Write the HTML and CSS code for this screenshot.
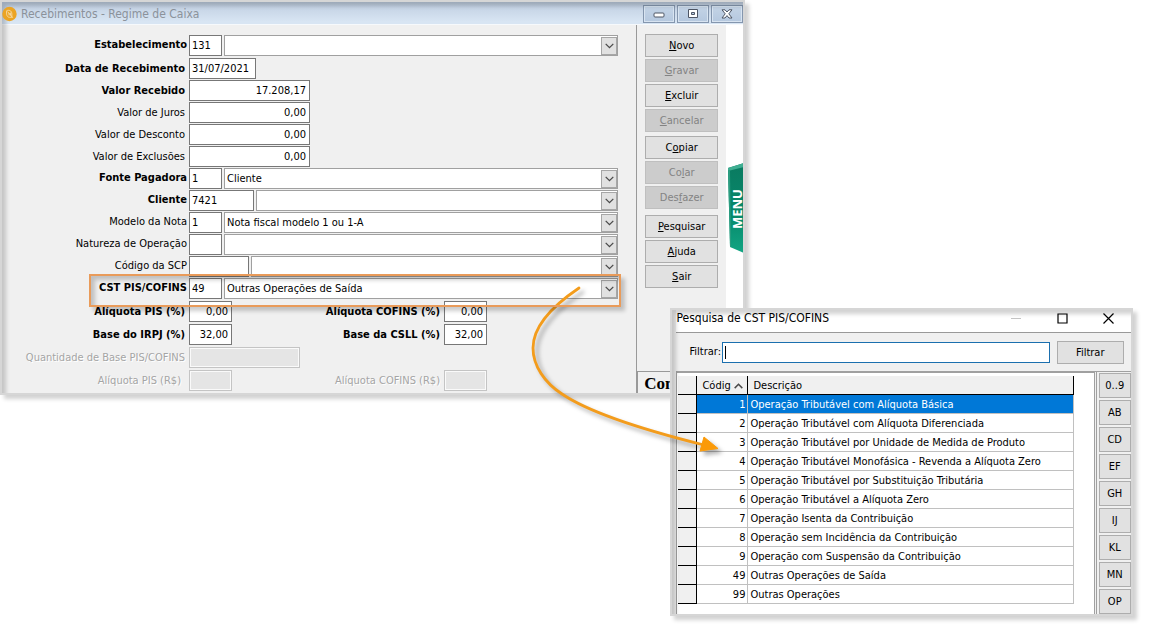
FILE: index.html
```html
<!DOCTYPE html>
<html lang="pt-BR">
<head>
<meta charset="utf-8">
<title>Recebimentos - Regime de Caixa</title>
<link rel="stylesheet" href="styles.css">
</head>
<body>
<svg class="defs" aria-hidden="true">
  <symbol id="chevron" viewBox="0 0 9 6"><path d="M.7.9 4.5 4.7 8.3.9" fill="none" stroke="#4a4a4a" stroke-width="1.3"/></symbol>
</svg>
<main class="desktop">
  <section class="window main-window">
    <header class="titlebar">
      <svg class="app-icon" viewBox="0 0 16 16" aria-hidden="true"><circle cx="8" cy="8" r="7.7" fill="#eba424"/><path d="M5 4.500c2-1 5.500-.5 5.500 3.500v3.500H8C5 11.500 4.500 8 5 4.500zM6 5.500l5.500 6.500M7.500 7v2.500M9 6.500v3" fill="none" stroke="#f8dfae" stroke-width=".9"/></svg>
      <h1 class="title">Recebimentos - Regime de Caixa</h1>
      <div class="controls">
        <button class="control" aria-label="Minimizar"><svg viewBox="0 0 12 10"><rect x="1" y="4" width="10" height="4" rx="1" fill="#fff" stroke="#4e5665"/></svg></button>
        <button class="control" aria-label="Restaurar"><svg viewBox="0 0 12 10"><path d="M1.500.500h9v8h-9z" fill="#fff" stroke="#4e5665"/><path d="M4.500 3.500h3v2h-3z" fill="#b9cce2" stroke="#4e5665"/></svg></button>
        <button class="control" aria-label="Fechar"><svg viewBox="0 0 12 10"><path d="M1 .8h3L6 3l2-2.200h3L7.800 4.800 11 9H8L6 6.600 4 9H1l3.200-4.200z" fill="#fff" stroke="#4e5665"/></svg></button>
      </div>
    </header>
    <div class="main-body">
      <form class="form">
        <div class="row tall combo-row"><label class="label strong" for="est">Estabelecimento</label><input class="field code" id="est" value="131"><div class="combo"><select aria-label="Nome do estabelecimento"><option></option></select><span class="arrow"><svg><use href="#chevron"/></svg></span></div></div>
        <div class="row"><label class="label strong" for="data">Data de Recebimento</label><input class="field date" id="data" value="31/07/2021"></div>
        <div class="row"><label class="label strong" for="valor">Valor Recebido</label><input class="field amount" id="valor" value="17.208,17"></div>
        <div class="row"><label class="label" for="juros">Valor de Juros</label><input class="field amount" id="juros" value="0,00"></div>
        <div class="row"><label class="label" for="desc">Valor de Desconto</label><input class="field amount" id="desc" value="0,00"></div>
        <div class="row"><label class="label" for="excl">Valor de Exclusões</label><input class="field amount" id="excl" value="0,00"></div>
        <div class="row combo-row"><label class="label strong" for="fonte">Fonte Pagadora</label><input class="field code" id="fonte" value="1"><div class="combo"><select aria-label="Descrição da fonte pagadora"><option>Cliente</option></select><span class="arrow"><svg><use href="#chevron"/></svg></span></div></div>
        <div class="row combo-row"><label class="label strong" for="cliente">Cliente</label><input class="field client" id="cliente" value="7421"><div class="combo"><select aria-label="Nome do cliente"><option></option></select><span class="arrow"><svg><use href="#chevron"/></svg></span></div></div>
        <div class="row combo-row"><label class="label" for="modelo">Modelo da Nota</label><input class="field code" id="modelo" value="1"><div class="combo"><select aria-label="Descrição do modelo"><option>Nota fiscal modelo 1 ou 1-A</option></select><span class="arrow"><svg><use href="#chevron"/></svg></span></div></div>
        <div class="row combo-row"><label class="label" for="natureza">Natureza de Operação</label><input class="field code" id="natureza"><div class="combo"><select aria-label="Descrição da natureza"><option></option></select><span class="arrow"><svg><use href="#chevron"/></svg></span></div></div>
        <div class="row combo-row"><label class="label" for="scp">Código da SCP</label><input class="field scp" id="scp"><div class="combo"><select aria-label="Descrição da SCP"><option></option></select><span class="arrow"><svg><use href="#chevron"/></svg></span></div></div>
        <div class="row tall combo-row highlighted"><label class="label strong" for="cst">CST PIS/COFINS</label><input class="field code" id="cst" value="49"><div class="combo"><select aria-label="Descrição do CST"><option>Outras Operações de Saída</option></select><span class="arrow"><svg><use href="#chevron"/></svg></span></div></div>
        <div class="row tall"><label class="label strong" for="apis">Alíquota PIS (%)</label><input class="field rate" id="apis" value="0,00"><label class="label strong second" for="acof">Alíquota COFINS (%)</label><input class="field rate" id="acof" value="0,00"></div>
        <div class="row tall"><label class="label strong" for="irpj">Base do IRPJ (%)</label><input class="field rate" id="irpj" value="32,00"><label class="label strong second" for="csll">Base da CSLL (%)</label><input class="field rate" id="csll" value="32,00"></div>
        <div class="row tall"><label class="label muted" for="qtd">Quantidade de Base PIS/COFINS</label><input class="field quantity" id="qtd" disabled></div>
        <div class="row tall"><label class="label muted inset" for="rpis">Alíquota PIS (R$)</label><input class="field rate" id="rpis" disabled><label class="label muted second" for="rcof">Alíquota COFINS (R$)</label><input class="field rate" id="rcof" disabled></div>
      </form>
      <aside class="sidebar">
        <div class="actions">
          <div class="action-group">
            <button class="button"><u>N</u>ovo</button>
            <button class="button" disabled><u>G</u>ravar</button>
            <button class="button"><u>E</u>xcluir</button>
            <button class="button" disabled><u>C</u>ancelar</button>
          </div>
          <div class="action-group">
            <button class="button">C<u>o</u>piar</button>
            <button class="button" disabled>Co<u>l</u>ar</button>
            <button class="button" disabled>Des<u>f</u>azer</button>
          </div>
          <div class="action-group last">
            <button class="button"><u>P</u>esquisar</button>
            <button class="button"><u>A</u>juda</button>
            <button class="button"><u>S</u>air</button>
          </div>
        </div>
        <div class="status">Con</div>
      </aside>
      <div class="menu-strip">
        <button class="menu-tab" aria-label="Menu"><svg width="17" height="92" viewBox="0 0 17 92"><defs><linearGradient id="green" x1="0" y1="0" x2="0" y2="1"><stop offset="0" stop-color="#0a7a60"/><stop offset=".6" stop-color="#078a6c"/><stop offset="1" stop-color="#12a583"/></linearGradient></defs><path d="M1 6 17 1v90L3 85z" fill="url(#green)"/><path d="M1 6 17 1v4L1 9z" fill="#3fae92"/><path d="M1 8 3 85 4 85 3 8z" fill="#2b9d80"/><text class="menu-text" transform="translate(15 67) rotate(-90)">MENU</text></svg></button>
      </div>
    </div>
  </section>

  <section class="window dialog">
    <header class="dialog-title">
      <h2 class="title">Pesquisa de CST PIS/COFINS</h2>
      <div class="dialog-controls">
        <button class="plain" aria-label="Minimizar" disabled><svg viewBox="0 0 11 11"><path d="M0 5.500h10" stroke="#c4c4c4"/></svg></button>
        <button class="plain" aria-label="Maximizar"><svg viewBox="0 0 11 11"><path d="M1 1h9v9H1z" fill="none" stroke="#000" stroke-width="1.200"/></svg></button>
        <button class="plain" aria-label="Fechar"><svg viewBox="0 0 11 11"><path d="M.5.500l10 10M10.500.500l-10 10" stroke="#000" stroke-width="1.200"/></svg></button>
      </div>
    </header>
    <form class="filter">
      <label for="filtro">Filtrar:</label>
      <div class="filter-box"><span class="caret"></span><input id="filtro"></div>
      <button class="button filter-button" type="button">Filtrar</button>
    </form>
    <div class="results">
      <div class="table-area">
        <table class="table">
          <thead><tr><th class="mark"></th><th class="num">Códig <svg class="sort" viewBox="0 0 9 6"><path d="M.7 5.100 4.500 1.300l3.800 3.800" fill="none" stroke="#4a4a4a" stroke-width="1.500"/></svg></th><th>Descrição</th></tr></thead>
          <tbody>
            <tr class="selected"><td class="mark"></td><td class="num">1</td><td>Operação Tributável com Alíquota Básica</td></tr>
            <tr><td class="mark"></td><td class="num">2</td><td>Operação Tributável com Alíquota Diferenciada</td></tr>
            <tr><td class="mark"></td><td class="num">3</td><td>Operação Tributável por Unidade de Medida de Produto</td></tr>
            <tr><td class="mark"></td><td class="num">4</td><td>Operação Tributável Monofásica - Revenda a Alíquota Zero</td></tr>
            <tr><td class="mark"></td><td class="num">5</td><td>Operação Tributável por Substituição Tributária</td></tr>
            <tr><td class="mark"></td><td class="num">6</td><td>Operação Tributável a Alíquota Zero</td></tr>
            <tr><td class="mark"></td><td class="num">7</td><td>Operação Isenta da Contribuição</td></tr>
            <tr><td class="mark"></td><td class="num">8</td><td>Operação sem Incidência da Contribuição</td></tr>
            <tr><td class="mark"></td><td class="num">9</td><td>Operação com Suspensão da Contribuição</td></tr>
            <tr><td class="mark"></td><td class="num">49</td><td>Outras Operações de Saída</td></tr>
            <tr><td class="mark"></td><td class="num">99</td><td>Outras Operações</td></tr>
          </tbody>
        </table>
      </div>
      <nav class="letters">
        <button class="button">0..9</button><button class="button">AB</button><button class="button">CD</button><button class="button">EF</button><button class="button">GH</button><button class="button">IJ</button><button class="button">KL</button><button class="button">MN</button><button class="button">OP</button>
      </nav>
    </div>
  </section>

  <svg class="pointer" viewBox="0 0 1150 626" aria-hidden="true">
    <path d="M579 288C548 309 533 329 533 348c0 18 12 35 29 46 28 19 78 35 142 51" fill="none" stroke="#f39c1c" stroke-width="2.800" stroke-linecap="round"/>
    <path d="M704 437 718 448.500 700 451z" fill="#fb9a08" stroke="#fb9a08"/>
  </svg>
</main>
</body>
</html>
```
FILE: styles.css
```css
* { box-sizing: border-box; }
body { margin: 0; background: #fff; color: #000; font: 11px/14px "DejaVu Sans Condensed", "Noto Sans", sans-serif; }
button, input, select { font: inherit; color: inherit; margin: 0; border-radius: 0; }
button { padding: 0; }
.defs { display: none; }
.desktop { position: relative; min-height: 100vh; overflow: hidden; }

.window { position: absolute; background: #f0f0f0; box-shadow: 4px 4px 4px rgba(0, 0, 0, .18); }
.window::after { content: ""; position: absolute; inset: 0; border: 2px solid #d6d6d6; box-shadow: inset 4px 4px 4px rgba(0, 0, 0, .18); pointer-events: none; }
.main-window { left: 0; top: 0; width: 64.8%; }
.dialog { left: 58.3%; top: 308px; width: 40.2%; padding: 0 2px 2px 6px; }
.title { margin: 0; font-size: 11px; font-weight: normal; line-height: 14px; }

.titlebar { display: flex; align-items: center; gap: 4px; height: 25px; padding: 3px 2px 0 2px; background: linear-gradient(#bccbde, #d8e5f3 90%); border-bottom: 1px solid #f6f9fc; color: #8b929b; }
.app-icon { width: 15px; height: 16px; position: relative; z-index: 1; }
.titlebar .title { flex: 1; font-size: 12px; }
.controls { display: flex; gap: 2px; }
.control { display: flex; align-items: center; justify-content: center; width: 32px; height: 18px; border: 1px solid #8496ae; background: linear-gradient(#c4d4e6, #b5c8df); box-shadow: inset 0 0 0 1px #d8e4f1; }
.control svg { width: 12px; height: 10px; }

.main-body { display: flex; }
.form { flex: 1; padding: 10px 18px 2px 0; }
.row { display: flex; height: 22px; }
.row.tall { height: 23px; }
.label { width: 189px; padding-right: 4px; line-height: 22px; text-align: right; white-space: nowrap; }
.combo-row .label { padding-right: 2px; line-height: 19px; }
.label.inset { padding-right: 8px; }
.label.second { width: 212px; }
.strong { font-weight: bold; }
.muted { color: #a5a5a5; text-shadow: 1px 1px #fff; }
.field { height: 21px; border: 1px solid #777; background: #fff; padding: 0 3px 1px 2px; }
.field:disabled { background: #e5e5e5; border-color: #c4c4c4; box-shadow: inset 0 0 0 1px #fafafa; }
.code { width: 33px; }
.date { width: 67px; }
.client { width: 65px; }
.scp { width: 60px; }
.amount { width: 121px; text-align: right; }
.rate { width: 43px; text-align: right; }
.quantity { width: 111px; }
.combo { flex: 1; display: flex; height: 21px; margin-left: 2px; border: 1px solid #a0a0a0; background: #fff; position: relative; }
.combo select { flex: 1; appearance: none; border: 0; padding: 0 20px 0 2px; background: transparent; }
.arrow { position: absolute; right: 0; top: 1px; bottom: 0; width: 16px; display: flex; align-items: center; justify-content: center; border: 1px solid #a6a6a6; background: #e1e1e1; pointer-events: none; }
.arrow svg { width: 9px; height: 6px; }
.highlighted { position: relative; }
.highlighted::after { content: ""; position: absolute; z-index: 1; left: 89px; right: -3px; top: -4px; height: 29px; border: 2px solid #e99b5a; box-shadow: 4px 4px 4px rgba(0, 0, 0, .2), inset 4px 4px 4px rgba(0, 0, 0, .2); pointer-events: none; }

.sidebar { display: flex; flex-direction: column; width: 90px; border-left: 1px solid #999; }
.actions { flex: 1; padding: 9px 8px 0; }
.action-group { display: grid; gap: 2px; margin-bottom: 4px; }
.action-group.last { margin-top: 6px; }
.button { height: 23px; padding-top: 1px; border: 1px solid #adadad; background: #e1e1e1; text-align: center; }
.button:disabled { background: #ccc; border-color: #bfbfbf; color: #838383; }
.status { height: 24px; padding: 3px 0 0 6px; border: 1px solid #999; border-width: 1px 0 0 1px; font: bold 17px/18px "Liberation Serif", serif; }
.menu-strip { width: 19px; padding-top: 137px; background: #fff; }
.menu-tab { display: block; width: 19px; height: 92px; padding-left: 1px; border: 0; background: none; text-align: left; }
.menu-text { fill: #fff; font: bold 13px "Open Sans", sans-serif; }

.dialog-title { display: flex; justify-content: space-between; height: 25px; padding: 3px 17px 0 0; border-bottom: 1px solid #999; background: #fff; }
.dialog-title .title { font-size: 12px; }
.dialog-controls { display: flex; gap: 35px; padding-top: 2px; }
.plain { display: block; width: 11px; height: 11px; border: 0; background: none; }
.plain svg { display: block; width: 11px; height: 11px; }
.filter { display: flex; align-items: center; height: 38px; padding: 0 7px 0 13px; }
.filter-box { flex: 1; display: flex; align-items: center; height: 21px; margin: 0 7px 0 1px; border: 1px solid #1b6fae; background: #fff; }
.filter-box input { flex: 1; min-width: 0; height: 17px; border: 0; padding: 0; outline: 0; }
.caret { width: 1px; height: 13px; margin-left: 2px; background: #000; }
.filter-button { width: 67px; }
.results { display: flex; border-top: 1px solid #a0a0a0; border-left: 1px solid #a0a0a0; }
.table-area { flex: 1; padding: 3px 20px 9px 1px; background: #fff; border-top: 1px solid #a0a0a0; border-right: 1px solid #a0a0a0; }
.table { width: 100%; border-collapse: separate; border-spacing: 0; table-layout: fixed; }
.table th, .table td { height: 19px; padding: 1px 2px 0; border-right: 1px solid #c0c0c0; border-bottom: 1px solid #c0c0c0; text-align: left; font-weight: normal; white-space: nowrap; line-height: 14px; }
.table th { padding-left: 5px; }
.table .mark { width: 19px; }
.table .num { width: 51px; text-align: right; }
.table th, .table .mark { background: #f0f0f0; border-color: #000; }
.table th.num { text-align: left; }
.table .selected td:not(.mark) { background: #0078d7; color: #fff; }
.sort { width: 9px; height: 6px; }
.letters { display: grid; gap: 2px; width: 35px; padding: 1px 0 0 2px; border-left: 1px solid #a0a0a0; margin-left: 1px; }
.letters .button { height: 25px; }

.pointer { position: absolute; left: 0; top: 0; width: 100%; pointer-events: none; filter: drop-shadow(4px 4px 2px rgba(0, 0, 0, .3)); }
```
